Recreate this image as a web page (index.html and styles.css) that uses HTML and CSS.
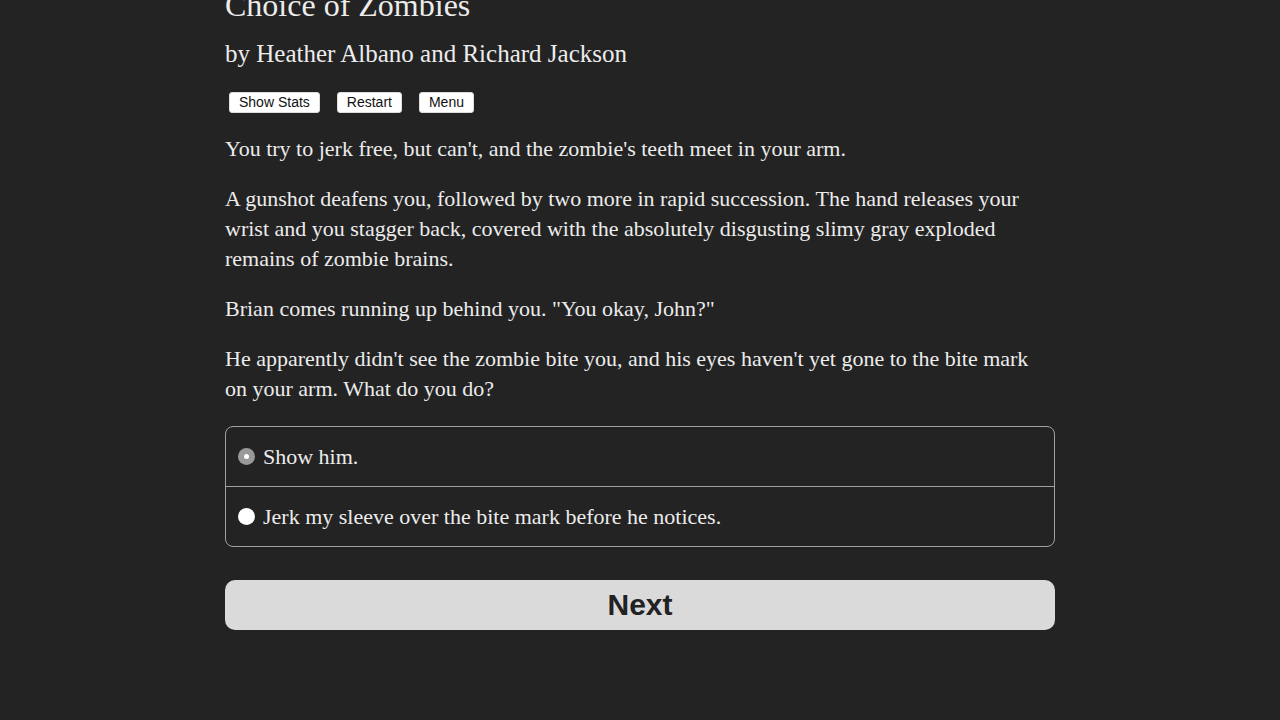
FILE: index.html
```html
<!DOCTYPE html>
<html lang="en">
<head>
<meta charset="utf-8">
<title>Choice of Zombies</title>
<link rel="stylesheet" href="styles.css">
</head>
<body>
<div class="page">
  <h1 class="title">Choice of Zombies</h1>
  <h2 class="byline">by Heather Albano and Richard Jackson</h2>
  <div class="buttons">
    <button class="small-btn">Show Stats</button>
    <button class="small-btn">Restart</button>
    <button class="small-btn">Menu</button>
  </div>
  <div class="text">
    <p>You try to jerk free, but can't, and the zombie's teeth meet in your arm.</p>
    <p>A gunshot deafens you, followed by two more in rapid succession. The hand releases your wrist and you stagger back, covered with the absolutely disgusting slimy gray exploded remains of zombie brains.</p>
    <p>Brian comes running up behind you. "You okay, John?"</p>
    <p>He apparently didn't see the zombie bite you, and his eyes haven't yet gone to the bite mark on your arm. What do you do?</p>
  </div>
  <div class="choices">
    <label class="choice"><span class="radio selected"></span><span>Show him.</span></label>
    <label class="choice"><span class="radio"></span><span>Jerk my sleeve over the bite mark before he notices.</span></label>
  </div>
  <button class="next">Next</button>
</div>
</body>
</html>
```

FILE: styles.css
```css
html, body {
  margin: 0;
  padding: 0;
  background: #232323;
}
body {
  color: #ececec;
  font-family: "Liberation Serif", "DejaVu Serif", serif;
}
.page {
  width: 830px;
  margin: 0 auto;
  display: flex;
  flex-direction: column;
}
.title {
  font-size: 32px;
  font-weight: normal;
  line-height: 36px;
  margin: -13px 0 0 0;
}
.byline {
  font-size: 25px;
  font-weight: normal;
  line-height: 30px;
  margin: 16px 0 0 0;
}
.buttons {
  display: flex;
  gap: 17px;
  margin: 23px 0 0 4px;
}
.small-btn {
  font-family: "Liberation Sans", Arial, sans-serif;
  font-size: 14px;
  line-height: 16px;
  padding: 1px 9px 2px;
  background: #fff;
  color: #111;
  border: 1px solid #ddd;
  border-radius: 3px;
}
.text {
  margin-top: 21px;
  font-size: 22px;
  line-height: 30px;
  width: 818px;
}
.text p {
  margin: 0 0 20px 0;
}
.choices {
  margin-top: 2px;
  border: 1px solid #a0a0a0;
  border-radius: 8px;
  display: flex;
  flex-direction: column;
}
.choice {
  display: flex;
  align-items: center;
  gap: 8px;
  height: 59px;
  padding-left: 12px;
  font-size: 22px;
}
.choice + .choice {
  border-top: 1px solid #a0a0a0;
}
.radio {
  width: 17px;
  height: 17px;
  border-radius: 50%;
  background: #fff;
  display: flex;
  align-items: center;
  justify-content: center;
  flex: none;
}
.radio.selected {
  background: #999;
}
.radio.selected::after {
  content: "";
  width: 5px;
  height: 5px;
  border-radius: 50%;
  background: #fff;
}
.next {
  margin-top: 33px;
  height: 50px;
  border: none;
  border-radius: 10px;
  background: #dadada;
  color: #222;
  font-family: "Liberation Sans", Arial, sans-serif;
  font-weight: bold;
  font-size: 30px;
  line-height: 50px;
  padding: 0;
}
```
